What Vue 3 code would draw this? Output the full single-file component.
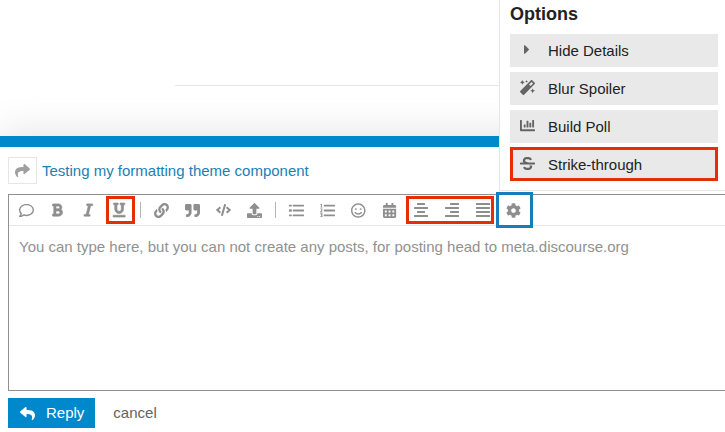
<script setup>
import { ref } from 'vue'

const draft = ref('')

const calendarCells = [64, 192, 320]
  .flatMap((x) => [256, 384].map((y) => `M${x} ${y}h64v64h-64z`))
  .join('')

const icons = {
  comment: { w: 512, d: 'M256 32C114.6 32 0 125.1 0 240c0 47.6 19.9 91.2 52.9 126.3C38 405.7 7 439.1 6.5 439.5c-6.6 7-8.4 17.2-4.6 26S14.4 480 24 480c61.5 0 110-25.7 139.1-46.3C192 442.8 223.2 448 256 448c141.4 0 256-93.1 256-208S397.4 32 256 32zm0 368c-26.7 0-53.1-4.1-78.4-12.1l-22.7-7.2-19.5 13.8c-14.3 10.1-33.9 21.4-57.5 29 7.3-12.1 14.4-25.7 19.9-40.2l10.6-28.1-20.6-21.8C69.7 314.1 48 282.2 48 240c0-88.2 93.3-160 208-160s208 71.8 208 160-93.3 160-208 160z' },
  bold: { w: 384, d: 'M333.49 238a122 122 0 0 0 27-65.21C367.87 96.49 308 32 233.42 32H34a16 16 0 0 0-16 16v48a16 16 0 0 0 16 16h31.87v288H34a16 16 0 0 0-16 16v48a16 16 0 0 0 16 16h209.32c70.8 0 134.14-51.75 141-122.4 4.74-48.45-16.39-92.06-50.83-119.6zM145.66 112h87.76a48 48 0 0 1 0 96h-87.76zm87.76 288h-87.76V288h87.76a56 56 0 0 1 0 112z' },
  italic: { w: 320, d: 'M320 48v32a16 16 0 0 1-16 16h-62.76l-80 320H208a16 16 0 0 1 16 16v32a16 16 0 0 1-16 16H16a16 16 0 0 1-16-16v-32a16 16 0 0 1 16-16h62.76l80-320H112a16 16 0 0 1-16-16V48a16 16 0 0 1 16-16h192a16 16 0 0 1 16 16z' },
  underline: { w: 448, d: 'M32 64h32v160c0 88.22 71.78 160 160 160s160-71.78 160-160V64h32a16 16 0 0 0 16-16V16a16 16 0 0 0-16-16H272a16 16 0 0 0-16 16v32a16 16 0 0 0 16 16h32v160a80 80 0 0 1-160 0V64h32a16 16 0 0 0 16-16V16a16 16 0 0 0-16-16H32a16 16 0 0 0-16 16v32a16 16 0 0 0 16 16zm400 384H16a16 16 0 0 0-16 16v32a16 16 0 0 0 16 16h416a16 16 0 0 0 16-16v-32a16 16 0 0 0-16-16z' },
  link: { w: 512, d: 'M326.612 185.391c59.747 59.809 58.927 155.698.36 214.59-.11.12-.24.25-.36.37l-67.2 67.2c-59.27 59.27-155.699 59.262-214.96 0-59.27-59.26-59.27-155.7 0-214.96l37.106-37.106c9.84-9.84 26.786-3.3 27.294 10.606.648 17.722 3.826 35.527 9.69 52.721 1.986 5.822.567 12.262-3.783 16.612l-13.087 13.087c-28.026 28.026-28.905 73.66-1.155 101.96 28.024 28.579 74.086 28.749 102.325.51l67.2-67.19c28.191-28.191 28.073-73.757 0-101.83-3.701-3.694-7.429-6.564-10.341-8.569a16.037 16.037 0 0 1-6.947-12.606c-.396-10.567 3.348-21.456 11.698-29.806l21.054-21.055c5.521-5.521 14.182-6.199 20.584-1.731a152.482 152.482 0 0 1 20.522 17.197zM467.547 44.449c-59.261-59.262-155.69-59.27-214.96 0l-67.2 67.2c-.12.12-.25.25-.36.37-58.566 58.892-59.387 154.781.36 214.59a152.454 152.454 0 0 0 20.521 17.196c6.402 4.468 15.064 3.789 20.584-1.731l21.054-21.055c8.35-8.35 12.094-19.239 11.698-29.806a16.037 16.037 0 0 0-6.947-12.606c-2.912-2.005-6.64-4.875-10.341-8.569-28.073-28.073-28.191-73.639 0-101.83l67.2-67.19c28.239-28.239 74.3-28.069 102.325.51 27.75 28.3 26.872 73.934-1.155 101.96l-13.087 13.087c-4.35 4.35-5.769 10.79-3.783 16.612 5.864 17.194 9.042 34.999 9.69 52.721.509 13.906 17.454 20.446 27.294 10.606l37.106-37.106c59.271-59.259 59.271-155.699.001-214.959z' },
  quote: { w: 512, d: 'M464 32H336c-26.5 0-48 21.5-48 48v128c0 26.5 21.5 48 48 48h80v64c0 35.3-28.7 64-64 64h-8c-13.3 0-24 10.7-24 24v48c0 13.3 10.7 24 24 24h8c88.4 0 160-71.6 160-160V80c0-26.5-21.5-48-48-48zm-288 0H48C21.5 32 0 53.5 0 80v128c0 26.5 21.5 48 48 48h80v64c0 35.3-28.7 64-64 64h-8c-13.3 0-24 10.7-24 24v48c0 13.3 10.7 24 24 24h8c88.4 0 160-71.6 160-160V80c0-26.5-21.5-48-48-48z' },
  code: { w: 640, d: 'M278.9 511.5l-61-17.7c-6.4-1.8-10-8.5-8.2-14.9L346.2 8.7c1.8-6.4 8.5-10 14.9-8.2l61 17.7c6.4 1.8 10 8.5 8.2 14.9L293.8 503.3c-1.9 6.4-8.5 10.1-14.9 8.2zm-114-112.2l43.5-46.4c4.6-4.9 4.3-12.7-.8-17.2L117 256l90.6-79.7c5.1-4.5 5.5-12.3.8-17.2l-43.5-46.4c-4.5-4.8-12.1-5.1-17-.5L3.8 247.2c-5.1 4.7-5.1 12.8 0 17.5l144.1 135.1c4.9 4.6 12.5 4.4 17-.5zm327.2.6l144.1-135.1c5.1-4.7 5.1-12.8 0-17.5L492.1 112.1c-4.8-4.5-12.4-4.3-17 .5L431.6 159c-4.6 4.9-4.3 12.7.8 17.2L523 256l-90.6 79.7c-5.1 4.5-5.5 12.3-.8 17.2l43.5 46.4c4.5 4.9 12.1 5.1 17 .6z' },
  upload: { w: 512, d: 'M296 384h-80c-13.3 0-24-10.7-24-24V192h-87.7c-17.8 0-26.7-21.5-14.1-34.1L242.3 5.7c7.5-7.5 19.8-7.5 27.3 0l152.2 152.2c12.6 12.6 3.7 34.1-14.1 34.1H320v168c0 13.3-10.7 24-24 24zm216-8v112c0 13.3-10.7 24-24 24H24c-13.3 0-24-10.7-24-24V376c0-13.3 10.7-24 24-24h136v8c0 30.9 25.1 56 56 56h80c30.9 0 56-25.1 56-56v-8h136c13.3 0 24 10.7 24 24zm-124 88c0-11-9-20-20-20s-20 9-20 20 9 20 20 20 20-9 20-20zm64 0c0-11-9-20-20-20s-20 9-20 20 9 20 20 20 20-9 20-20z' },
  bullets: { w: 512, d: 'M16 56h64q16 0 16 16v32q0 16-16 16H16q-16 0-16-16V72q0-16 16-16zm0 160h64q16 0 16 16v48q0 16-16 16H16q-16 0-16-16v-48q0-16 16-16zm0 176h64q16 0 16 16v32q0 16-16 16H16q-16 0-16-16v-32q0-16 16-16zM144 56h352q16 0 16 16v32q0 16-16 16H144q-16 0-16-16V72q0-16 16-16zm0 168h352q16 0 16 16v32q0 16-16 16H144q-16 0-16-16v-32q0-16 16-16zm0 168h352q16 0 16 16v32q0 16-16 16H144q-16 0-16-16v-32q0-16 16-16z' },
  numbers: { w: 512, d: 'M20 32h44v96h20v28H16v-28h20V64H16V44zM12 184h70v62l-36 42h38v32H8v-28l40-50v-26H12zM12 352h72v46l-10 16 14 18v48H10v-28h48v-18H30v-30l26-24H12zM144 56h352q16 0 16 16v32q0 16-16 16H144q-16 0-16-16V72q0-16 16-16zm0 168h352q16 0 16 16v32q0 16-16 16H144q-16 0-16-16v-32q0-16 16-16zm0 168h352q16 0 16 16v32q0 16-16 16H144q-16 0-16-16v-32q0-16 16-16z' },
  smile: { w: 496, d: 'M248 8C111 8 0 119 0 256s111 248 248 248 248-111 248-248S385 8 248 8zm0 448c-110.3 0-200-89.7-200-200S137.7 56 248 56s200 89.7 200 200-89.7 200-200 200zm-80-216c17.7 0 32-14.3 32-32s-14.3-32-32-32-32 14.3-32 32 14.3 32 32 32zm160 0c17.7 0 32-14.3 32-32s-14.3-32-32-32-32 14.3-32 32 14.3 32 32 32zm4 72.6c-20.8 25-51.5 39.4-84 39.4s-63.2-14.3-84-39.4c-8.5-10.2-23.7-11.5-33.8-3.1-10.2 8.5-11.5 23.6-3.1 33.8 30 36 74.1 56.6 120.9 56.6s90.9-20.6 120.9-56.6c8.5-10.2 7.1-25.3-3.1-33.8-10.1-8.4-25.3-7.1-33.8 3.1z' },
  calendar: { w: 448, d: 'M0 464c0 26.5 21.5 48 48 48h352c26.5 0 48-21.5 48-48V192H0zM448 160v-48c0-26.5-21.5-48-48-48h-48V12c0-6.6-5.4-12-12-12h-40c-6.6 0-12 5.4-12 12v52H160V12c0-6.6-5.4-12-12-12h-40c-6.6 0-12 5.4-12 12v52H48C21.5 64 0 85.5 0 112v48z' + calendarCells },
  alignCenter: { w: 448, d: 'M112 32h224q16 0 16 16v32q0 16-16 16H112q-16 0-16-16V48q0-16 16-16zM16 160h416q16 0 16 16v32q0 16-16 16H16q-16 0-16-16v-32q0-16 16-16zM112 288h224q16 0 16 16v32q0 16-16 16H112q-16 0-16-16v-32q0-16 16-16zM16 416h416q16 0 16 16v32q0 16-16 16H16q-16 0-16-16v-32q0-16 16-16z' },
  alignRight: { w: 448, d: 'M176 32h256q16 0 16 16v32q0 16-16 16H176q-16 0-16-16V48q0-16 16-16zM16 160h416q16 0 16 16v32q0 16-16 16H16q-16 0-16-16v-32q0-16 16-16zM176 288h256q16 0 16 16v32q0 16-16 16H176q-16 0-16-16v-32q0-16 16-16zM16 416h416q16 0 16 16v32q0 16-16 16H16q-16 0-16-16v-32q0-16 16-16z' },
  justify: { w: 448, d: 'M16 32h416q16 0 16 16v32q0 16-16 16H16q-16 0-16-16V48q0-16 16-16zM16 160h416q16 0 16 16v32q0 16-16 16H16q-16 0-16-16v-32q0-16 16-16zM16 288h416q16 0 16 16v32q0 16-16 16H16q-16 0-16-16v-32q0-16 16-16zM16 416h416q16 0 16 16v32q0 16-16 16H16q-16 0-16-16v-32q0-16 16-16z' },
  cog: { w: 512, d: 'M487.4 315.7l-42.6-24.6c4.3-23.2 4.3-47 0-70.2l42.6-24.6c4.9-2.8 7.1-8.6 5.5-14-11.1-35.6-30-67.8-54.7-94.6-3.8-4.1-10-5.1-14.8-2.3L380.8 110c-17.9-15.4-38.5-27.3-60.8-35.1V25.8c0-5.6-3.9-10.5-9.4-11.7-36.7-8.2-74.3-7.8-109.2 0-5.5 1.2-9.4 6.1-9.4 11.7V75c-22.2 7.9-42.8 19.8-60.8 35.1L88.7 85.5c-4.9-2.8-11-1.9-14.8 2.3-24.7 26.7-43.6 58.9-54.7 94.6-1.7 5.4.6 11.2 5.5 14L67.3 221c-4.3 23.2-4.3 47 0 70.2l-42.6 24.6c-4.9 2.8-7.1 8.6-5.5 14 11.1 35.6 30 67.8 54.7 94.6 3.8 4.1 10 5.1 14.8 2.3l42.6-24.6c17.9 15.4 38.5 27.3 60.8 35.1v49.2c0 5.6 3.9 10.5 9.4 11.7 36.7 8.2 74.3 7.8 109.2 0 5.5-1.2 9.4-6.1 9.4-11.7v-49.2c22.2-7.9 42.8-19.8 60.8-35.1l42.6 24.6c4.9 2.8 11 1.9 14.8-2.3 24.7-26.7 43.6-58.9 54.7-94.6 1.5-5.5-.7-11.3-5.6-14.1zM256 336c-44.1 0-80-35.9-80-80s35.9-80 80-80 80 35.9 80 80-35.9 80-80 80z' },
  share: { w: 512, d: 'M503.691 189.836L327.687 37.851C312.281 24.546 288 35.347 288 56.015v80.053C127.371 137.907 0 170.1 0 322.326c0 61.441 39.581 122.309 83.333 154.132 13.653 9.931 33.111-2.533 28.077-18.631C66.066 312.814 132.917 274.316 288 272.085V360c0 20.7 24.3 31.453 39.687 18.164l176.004-152c11.071-9.562 11.086-26.753 0-36.328z' },
  reply: { w: 512, d: 'M8.309 189.836L184.313 37.851C199.719 24.546 224 35.347 224 56.015v80.053c160.629 1.839 288 34.032 288 186.258 0 61.441-39.581 122.309-83.333 154.132-13.653 9.931-33.111-2.533-28.077-18.631 45.344-145.013-21.507-183.511-176.59-185.742V360c0 20.7-24.3 31.453-39.687 18.164l-176.004-152c-11.071-9.562-11.086-26.753 0-36.328z' },
  caret: { w: 192, d: 'M0 384.662V127.338c0-17.818 21.543-26.741 34.142-14.142l128.662 128.662c7.81 7.81 7.81 20.474 0 28.284L34.142 398.804C21.543 411.404 0 402.48 0 384.662z' },
  magic: { w: 512, d: 'M224 96l16-32 32-16-32-16-16-32-16 32-32 16 32 16 16 32zM80 160l26.66-53.33L160 80l-53.34-26.67L80 0 53.34 53.33 0 80l53.34 26.67L80 160zm352 128l-26.66 53.33L352 368l53.34 26.67L432 448l26.66-53.33L512 368l-53.34-26.67L432 288zm70.62-193.77L417.77 9.38C411.53 3.12 403.34 0 395.15 0c-8.19 0-16.38 3.12-22.63 9.38L9.38 372.52c-12.5 12.5-12.5 32.76 0 45.25l84.85 84.85c6.25 6.25 14.44 9.37 22.62 9.37 8.19 0 16.38-3.12 22.63-9.37l363.14-363.15c12.5-12.48 12.5-32.75 0-45.24zM359.45 203.46l-50.91-50.91 86.6-86.6 50.91 50.91-86.6 86.6z' },
  chart: { w: 512, d: 'M16 64h32q16 0 16 16v304h432q16 0 16 16v32q0 16-16 16H32q-32 0-32-32V80q0-16 16-16zM141 224h38q13 0 13 13v70q0 13-13 13h-38q-13 0-13-13v-70q0-13 13-13zM237 96h38q13 0 13 13v198q0 13-13 13h-38q-13 0-13-13V109q0-13 13-13zM333 160h38q13 0 13 13v134q0 13-13 13h-38q-13 0-13-13V173q0-13 13-13zM429 64h38q13 0 13 13v230q0 13-13 13h-38q-13 0-13-13V77q0-13 13-13z' },
  strike: { w: 512, d: 'M496 224H293.9l-87.17-26.83A43.55 43.55 0 0 1 219.55 112h66.79A49.89 49.89 0 0 1 331 139.58a16 16 0 0 0 21.46 7.15l42.94-21.47a16 16 0 0 0 7.16-21.46l-.53-1A128 128 0 0 0 287.51 32h-68a123.68 123.68 0 0 0-123 135.64c2 20.89 10.1 39.83 21.78 56.36H16a16 16 0 0 0-16 16v32a16 16 0 0 0 16 16h480a16 16 0 0 0 16-16v-32a16 16 0 0 0-16-16zm-180.24 96A43 43 0 0 1 336 356.45 43.59 43.59 0 0 1 292.45 400h-66.79A49.89 49.89 0 0 1 181 372.42a16 16 0 0 0-21.46-7.15l-42.94 21.47a16 16 0 0 0-7.16 21.46l.53 1A128 128 0 0 0 224.49 480h68a123.68 123.68 0 0 0 123-135.64 114.25 114.25 0 0 0-5.34-24.36z' },
}

const groups = [
  { items: [['comment', 'Quote whole post'], ['bold', 'Bold'], ['italic', 'Italic']] },
  { mark: 'mark-single', items: [['underline', 'Underline']] },
  { divider: true },
  { items: [['link', 'Link'], ['quote', 'Blockquote'], ['code', 'Code'], ['upload', 'Upload']] },
  { divider: true },
  { items: [['bullets', 'Bulleted list'], ['numbers', 'Numbered list'], ['smile', 'Emoji'], ['calendar', 'Date']] },
  { mark: 'mark-group', items: [['alignCenter', 'Align center'], ['alignRight', 'Align right'], ['justify', 'Justify']] },
  { mark: 'mark-gear', items: [['cog', 'Options']] },
]

const options = [
  { icon: 'caret', label: 'Hide Details' },
  { icon: 'magic', label: 'Blur Spoiler' },
  { icon: 'chart', label: 'Build Poll' },
  { icon: 'strike', label: 'Strike-through', marked: true },
]
</script>

<template>
  <div class="page">
    <main class="topic"><hr class="rule" /></main>

    <section class="composer">
      <div class="grippie"></div>
      <div class="body">
        <header class="title-row">
          <button type="button" class="share" aria-label="Reply options">
            <svg class="icon" :viewBox="`0 0 ${icons.share.w} 512`"><path :d="icons.share.d" /></svg>
          </button>
          <a href="#" class="topic-link">Testing my formatting theme component</a>
        </header>

        <div class="editor">
          <div class="toolbar" role="toolbar" aria-label="Formatting">
            <template v-for="(group, g) in groups" :key="g">
              <span v-if="group.divider" class="divider"></span>
              <div v-else class="group" :class="group.mark">
                <button v-for="[name, label] in group.items" :key="name" type="button" class="tool" :aria-label="label">
                  <svg class="icon" :class="name" :viewBox="`0 0 ${icons[name].w} 512`">
                    <path :d="icons[name].d" fill-rule="evenodd" />
                  </svg>
                </button>
              </div>
            </template>
          </div>
          <textarea
            v-model="draft"
            class="input"
            aria-label="Post text"
            placeholder="You can type here, but you can not create any posts, for posting head to meta.discourse.org"
          ></textarea>
        </div>

        <footer class="actions">
          <button type="button" class="reply">
            <svg class="icon" :viewBox="`0 0 ${icons.reply.w} 512`"><path :d="icons.reply.d" /></svg>
            <span>Reply</span>
          </button>
          <a href="#" class="cancel">cancel</a>
        </footer>
      </div>
    </section>

    <aside class="popup">
      <h3 class="popup-title">Options</h3>
      <ul class="option-list">
        <li v-for="option in options" :key="option.label">
          <button type="button" class="option" :class="{ marked: option.marked }">
            <span class="option-icon">
              <svg class="icon" :viewBox="`0 0 ${icons[option.icon].w} 512`">
                <path :d="icons[option.icon].d" fill-rule="evenodd" />
              </svg>
            </span>
            <span>{{ option.label }}</span>
          </button>
        </li>
      </ul>
    </aside>
  </div>
</template>

<style>
body {
  margin: 0;
  background: #fff;
}
</style>

<style scoped>
.page {
  position: relative;
  display: flex;
  flex-direction: column;
  min-height: 100vh;
  overflow: hidden;
  font-family: "Liberation Sans", Arial, sans-serif;
  font-size: 15px;
  line-height: 20px;
  color: #222;
}
button {
  margin: 0;
  padding: 0;
  border: 0;
  background: none;
  font: inherit;
  color: inherit;
  cursor: pointer;
}
a {
  text-decoration: none;
}
.icon {
  display: block;
  height: 15px;
  overflow: visible;
  fill: currentColor;
}
.topic {
  height: 136px;
}
.rule {
  margin: 85px 0 0 175px;
  border: 0;
  border-top: 1px solid #e6e6e6;
}
.composer {
  display: flex;
  flex: 1;
  flex-direction: column;
  background: #fff;
  box-shadow: 0 -1px 40px rgba(0, 0, 0, 0.12);
}
.grippie {
  height: 11px;
  background: #0088cc;
}
.body {
  display: flex;
  flex: 1;
  flex-direction: column;
  padding: 10px 0 4px 8px;
}
.title-row {
  display: flex;
  align-items: center;
  gap: 5px;
  margin-bottom: 10px;
}
.share {
  display: flex;
  align-items: center;
  justify-content: center;
  box-sizing: border-box;
  width: 29px;
  height: 27px;
  border: 1px solid #e6e6e6;
  color: #a0a0a0;
}
.topic-link {
  color: #1a80b6;
}
.editor {
  display: flex;
  flex: 1;
  flex-direction: column;
  border: 1px solid #909090;
  border-right: 0;
}
.toolbar {
  display: flex;
  align-items: center;
  height: 30px;
  padding-left: 2px;
  border-bottom: 1px solid #e6e6e6;
  color: #8e8e8e;
}
.group {
  position: relative;
  display: flex;
}
.tool {
  display: flex;
  align-items: center;
  justify-content: center;
  width: 31px;
  height: 30px;
}
.bold,
.italic,
.underline {
  height: 14px;
  stroke: currentColor;
  stroke-width: 24px;
}
.alignCenter,
.alignRight,
.justify {
  height: 16px;
}
.code {
  height: 12px;
}
.divider {
  width: 1px;
  height: 16px;
  margin: 0 5px;
  background: #b4b4b4;
}
.mark-single::after,
.mark-group::after,
.mark-gear::after {
  content: "";
  position: absolute;
  inset: 1px 0 1px 2px;
  border: 3px solid #e62e04;
  pointer-events: none;
}
.mark-group::after {
  inset: 1px 4px 1px 1px;
}
.mark-gear::after {
  inset: -3px -4px -3px -2px;
  z-index: 2;
  border-color: #1580b8;
}
.input {
  flex: 1;
  padding: 11px 10px;
  border: 0;
  outline: 0;
  resize: none;
  background: none;
  font: inherit;
  color: #222;
}
.input::placeholder {
  color: #919191;
  opacity: 1;
}
.actions {
  display: flex;
  align-items: center;
  gap: 18px;
  margin-top: 7px;
}
.reply {
  display: flex;
  align-items: center;
  gap: 11px;
  height: 30px;
  padding: 0 11px 0 12px;
  background: #0088cc;
  color: #fff;
}
.cancel {
  color: #646464;
}
.popup {
  position: absolute;
  top: 0;
  right: 0;
  box-sizing: border-box;
  width: 226px;
  padding: 4px 7px 9px 10px;
  border: 1px solid #e6e6e6;
  border-width: 0 0 1px 1px;
  background: #fff;
}
.popup-title {
  margin: 0 0 10px;
  font-size: 18px;
  line-height: 20px;
}
.option-list {
  display: grid;
  gap: 5px;
  margin: 0;
  padding: 0;
  list-style: none;
}
.option {
  position: relative;
  display: flex;
  align-items: center;
  gap: 12px;
  width: 100%;
  height: 33px;
  padding: 0 8px;
  background: #e9e9e9;
}
.option-icon {
  display: flex;
  justify-content: center;
  width: 18px;
  padding-bottom: 3px;
  color: #646464;
}
.marked::after {
  content: "";
  position: absolute;
  inset: -1px 0 0;
  border: 3px solid #e62e04;
  pointer-events: none;
}
</style>
